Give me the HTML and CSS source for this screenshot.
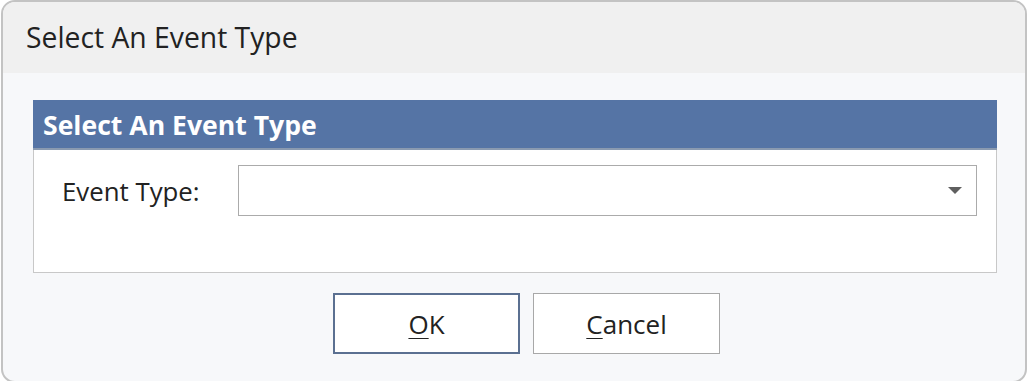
FILE: index.html
```html
<!DOCTYPE html>
<html>
<head>
<meta charset="utf-8">
<link rel="stylesheet" href="styles.css">
</head>
<body>
<div class="dialog">
  <div class="dialog-header">Select An Event Type</div>
  <div class="dialog-body">
    <div class="panel">
      <div class="panel-title">Select An Event Type</div>
      <div class="panel-content">
        <label class="field-label">Event Type:</label>
        <div class="select">
          <svg class="caret" width="16" height="8" viewBox="0 0 16 8"><path d="M1 0 L15 0 L8 7 Z" fill="#5f5f5f"/></svg>
        </div>
      </div>
    </div>
    <div class="buttons">
      <button class="btn btn-primary"><u>O</u>K</button>
      <button class="btn"><u>C</u>ancel</button>
    </div>
  </div>
</div>
</body>
</html>
```
FILE: styles.css
```css
html, body {
  margin: 0;
  padding: 0;
  background: #ffffff;
}
body {
  font-family: "Open Sans", "Noto Sans", sans-serif;
  color: #222;
}
.dialog {
  box-sizing: border-box;
  width: 1026px;
  height: 383px;
  margin-left: 1px;
  border: 2px solid #c3c3c3;
  border-radius: 14px;
  overflow: hidden;
  background: #f7f8fa;
}
.dialog-header {
  height: 71px;
  background: #f0f0f0;
  font-size: 28.3px;
  line-height: 71px;
  padding-left: 23px;
  color: #222;
}
.dialog-body {
  padding: 27px 28px 0 30px;
}
.panel {
  border: 1px solid #c8c8c8;
  background: #ffffff;
}
.panel-title {
  height: 48px;
  background: #5574a5;
  border-bottom: 2px solid #8a9ab0;
  color: #ffffff;
  font-weight: bold;
  font-size: 26.6px;
  line-height: 51px;
  padding-left: 10px;
  margin: -1px -1px 0 -1px;
}
.panel-content {
  display: flex;
  align-items: center;
  padding: 15px 19px 56px 28px;
}
.field-label {
  width: 176px;
  font-size: 25.8px;
  color: #222;
}
.select {
  flex: 1;
  height: 49px;
  border: 1px solid #ababab;
  display: flex;
  align-items: center;
  justify-content: flex-end;
  padding-right: 13px;
}
.buttons {
  display: flex;
  justify-content: center;
  gap: 13px;
  margin-top: 20px;
  padding-left: 23px;
}
.btn {
  width: 187px;
  height: 61px;
  background: #ffffff;
  border: 1px solid #a8a8a8;
  font-family: "Open Sans", "Noto Sans", sans-serif;
  font-size: 26px;
  color: #222;
  padding: 0;
}
.btn u {
  text-decoration-thickness: 1px;
  text-underline-offset: 4px;
}
.btn-primary {
  border: 2px solid #5b7091;
}
```
